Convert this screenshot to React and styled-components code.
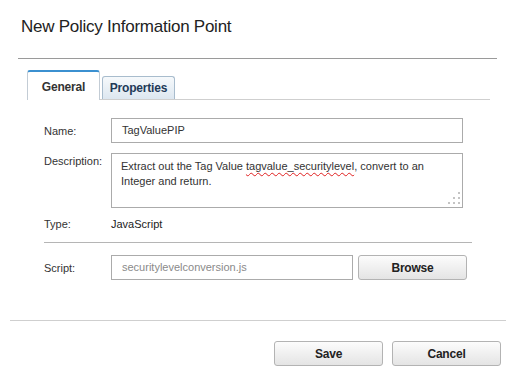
import React from "react";
import styled, { createGlobalStyle } from "styled-components";

const GlobalStyle = createGlobalStyle`
  body {
    margin: 0;
    background: #fff;
    font-family: "Liberation Sans", Arial, sans-serif;
    color: #333;
  }
`;

const Dialog = styled.div`
  width: 515px;
  height: 376px;
  background: #fff;
  overflow: hidden;
`;

const Header = styled.div`
  margin: 0 18px;
  padding: 16px 0 20px 3px;
  border-bottom: 1px solid #9a9a9a;
`;

const Title = styled.h1`
  margin: 0;
  font-size: 17px;
  line-height: 22px;
  letter-spacing: -0.25px;
  font-weight: normal;
  color: #222;
`;

const TabBar = styled.div`
  display: flex;
  align-items: flex-end;
  gap: 2px;
  margin: 11px 25px 0 27px;
  height: 29px;
  border-bottom: 1px solid #cfcfcf;
`;

const Tab = styled.div`
  box-sizing: border-box;
  width: 73px;
  display: flex;
  align-items: center;
  justify-content: center;
  font-size: 12px;
  letter-spacing: -0.2px;
  font-weight: bold;
  border-radius: 3px 3px 0 0;
  ${(p) =>
    p.$active
      ? `
    height: 30px;
    margin-bottom: -1px;
    padding-top: 2px;
    background: #fff;
    color: #333;
    border: 1px solid #c3ccd5;
    border-top: 2px solid #3b90d0;
    border-bottom: none;
  `
      : `
    height: 23px;
    background: linear-gradient(#f6f9fb, #dde7f0);
    color: #1f3a58;
    border: 1px solid #a8bccd;
    border-bottom: none;
  `}
`;

const Form = styled.div`
  padding: 18px 0 0 44px;
`;

const Row = styled.div`
  display: flex;
  align-items: ${(p) => (p.$top ? "flex-start" : "center")};
  margin-top: ${(p) => p.$mt || 0}px;
`;

const Label = styled.div`
  width: 67px;
  flex: none;
  font-size: 11px;
  line-height: 14px;
  color: #333;
  padding-top: ${(p) => p.$pt || 0}px;
`;

const Value = styled.div`
  font-size: 11px;
  line-height: 14px;
  color: #222;
`;

const Field = styled.div`
  box-sizing: border-box;
  width: ${(p) => p.$w}px;
  height: ${(p) => p.$h || 25}px;
  border: 1px solid #ababab;
  background: #fff;
  padding: 0 10px;
  font-size: 11px;
  line-height: 23px;
  color: ${(p) => (p.$muted ? "#8a8a8a" : "#333")};
`;

const TextArea = styled.div`
  position: relative;
  box-sizing: border-box;
  width: 352px;
  height: 55px;
  border: 1px solid #ababab;
  padding: 5px 9px;
  font-size: 11px;
  line-height: 15px;
  color: #333;
`;

const Misspelt = styled.span`
  text-decoration: underline wavy #e02020;
  text-decoration-thickness: 1px;
  text-decoration-skip-ink: none;
  text-underline-offset: 2px;
`;

const Grip = styled.svg`
  position: absolute;
  right: 1px;
  bottom: 2px;
`;

const Divider = styled.div`
  width: 428px;
  height: 1px;
  background: #b5b5b5;
  margin-top: ${(p) => p.$mt}px;
`;

const Button = styled.button`
  box-sizing: border-box;
  width: 109px;
  height: 25px;
  margin-left: ${(p) => p.$ml || 0}px;
  border: 1px solid #b3b3b3;
  border-radius: 3px;
  background: linear-gradient(#fcfcfc, #e4e4e4);
  font-family: "Liberation Sans", Arial, sans-serif;
  font-size: 12px;
  letter-spacing: -0.2px;
  font-weight: bold;
  color: #222;
  padding: 0;
`;

const Footer = styled.div`
  margin: 40px 9px 0 10px;
  border-top: 1px solid #cfcfcf;
  padding: 20px 5px 0 0;
  display: flex;
  justify-content: flex-end;
  gap: 9px;
`;

export default function App() {
  return (
    <Dialog>
      <GlobalStyle />
      <Header>
        <Title>New Policy Information Point</Title>
      </Header>
      <TabBar>
        <Tab $active>General</Tab>
        <Tab>Properties</Tab>
      </TabBar>
      <Form>
        <Row>
          <Label>Name:</Label>
          <Field $w={352}>TagValuePIP</Field>
        </Row>
        <Row $top $mt={10}>
          <Label $pt={1}>Description:</Label>
          <TextArea>
            Extract out the Tag Value <Misspelt>tagvalue_securitylevel</Misspelt>, convert to an
            <br />
            Integer and return.
            <Grip width="13" height="13" viewBox="0 0 13 13">
              <g fill="#c4c4c4">
                <rect x="10" y="0" width="2" height="2" />
                <rect x="5" y="5" width="2" height="2" />
                <rect x="10" y="5" width="2" height="2" />
                <rect x="0" y="10" width="2" height="2" />
                <rect x="5" y="10" width="2" height="2" />
                <rect x="10" y="10" width="2" height="2" />
              </g>
            </Grip>
          </TextArea>
        </Row>
        <Row $mt={9}>
          <Label>Type:</Label>
          <Value>JavaScript</Value>
        </Row>
        <Divider $mt={11} />
        <Row $mt={12}>
          <Label>Script:</Label>
          <Field $w={242} $muted>
            securitylevelconversion.js
          </Field>
          <Button $ml={5}>Browse</Button>
        </Row>
      </Form>
      <Footer>
        <Button>Save</Button>
        <Button>Cancel</Button>
      </Footer>
    </Dialog>
  );
}
